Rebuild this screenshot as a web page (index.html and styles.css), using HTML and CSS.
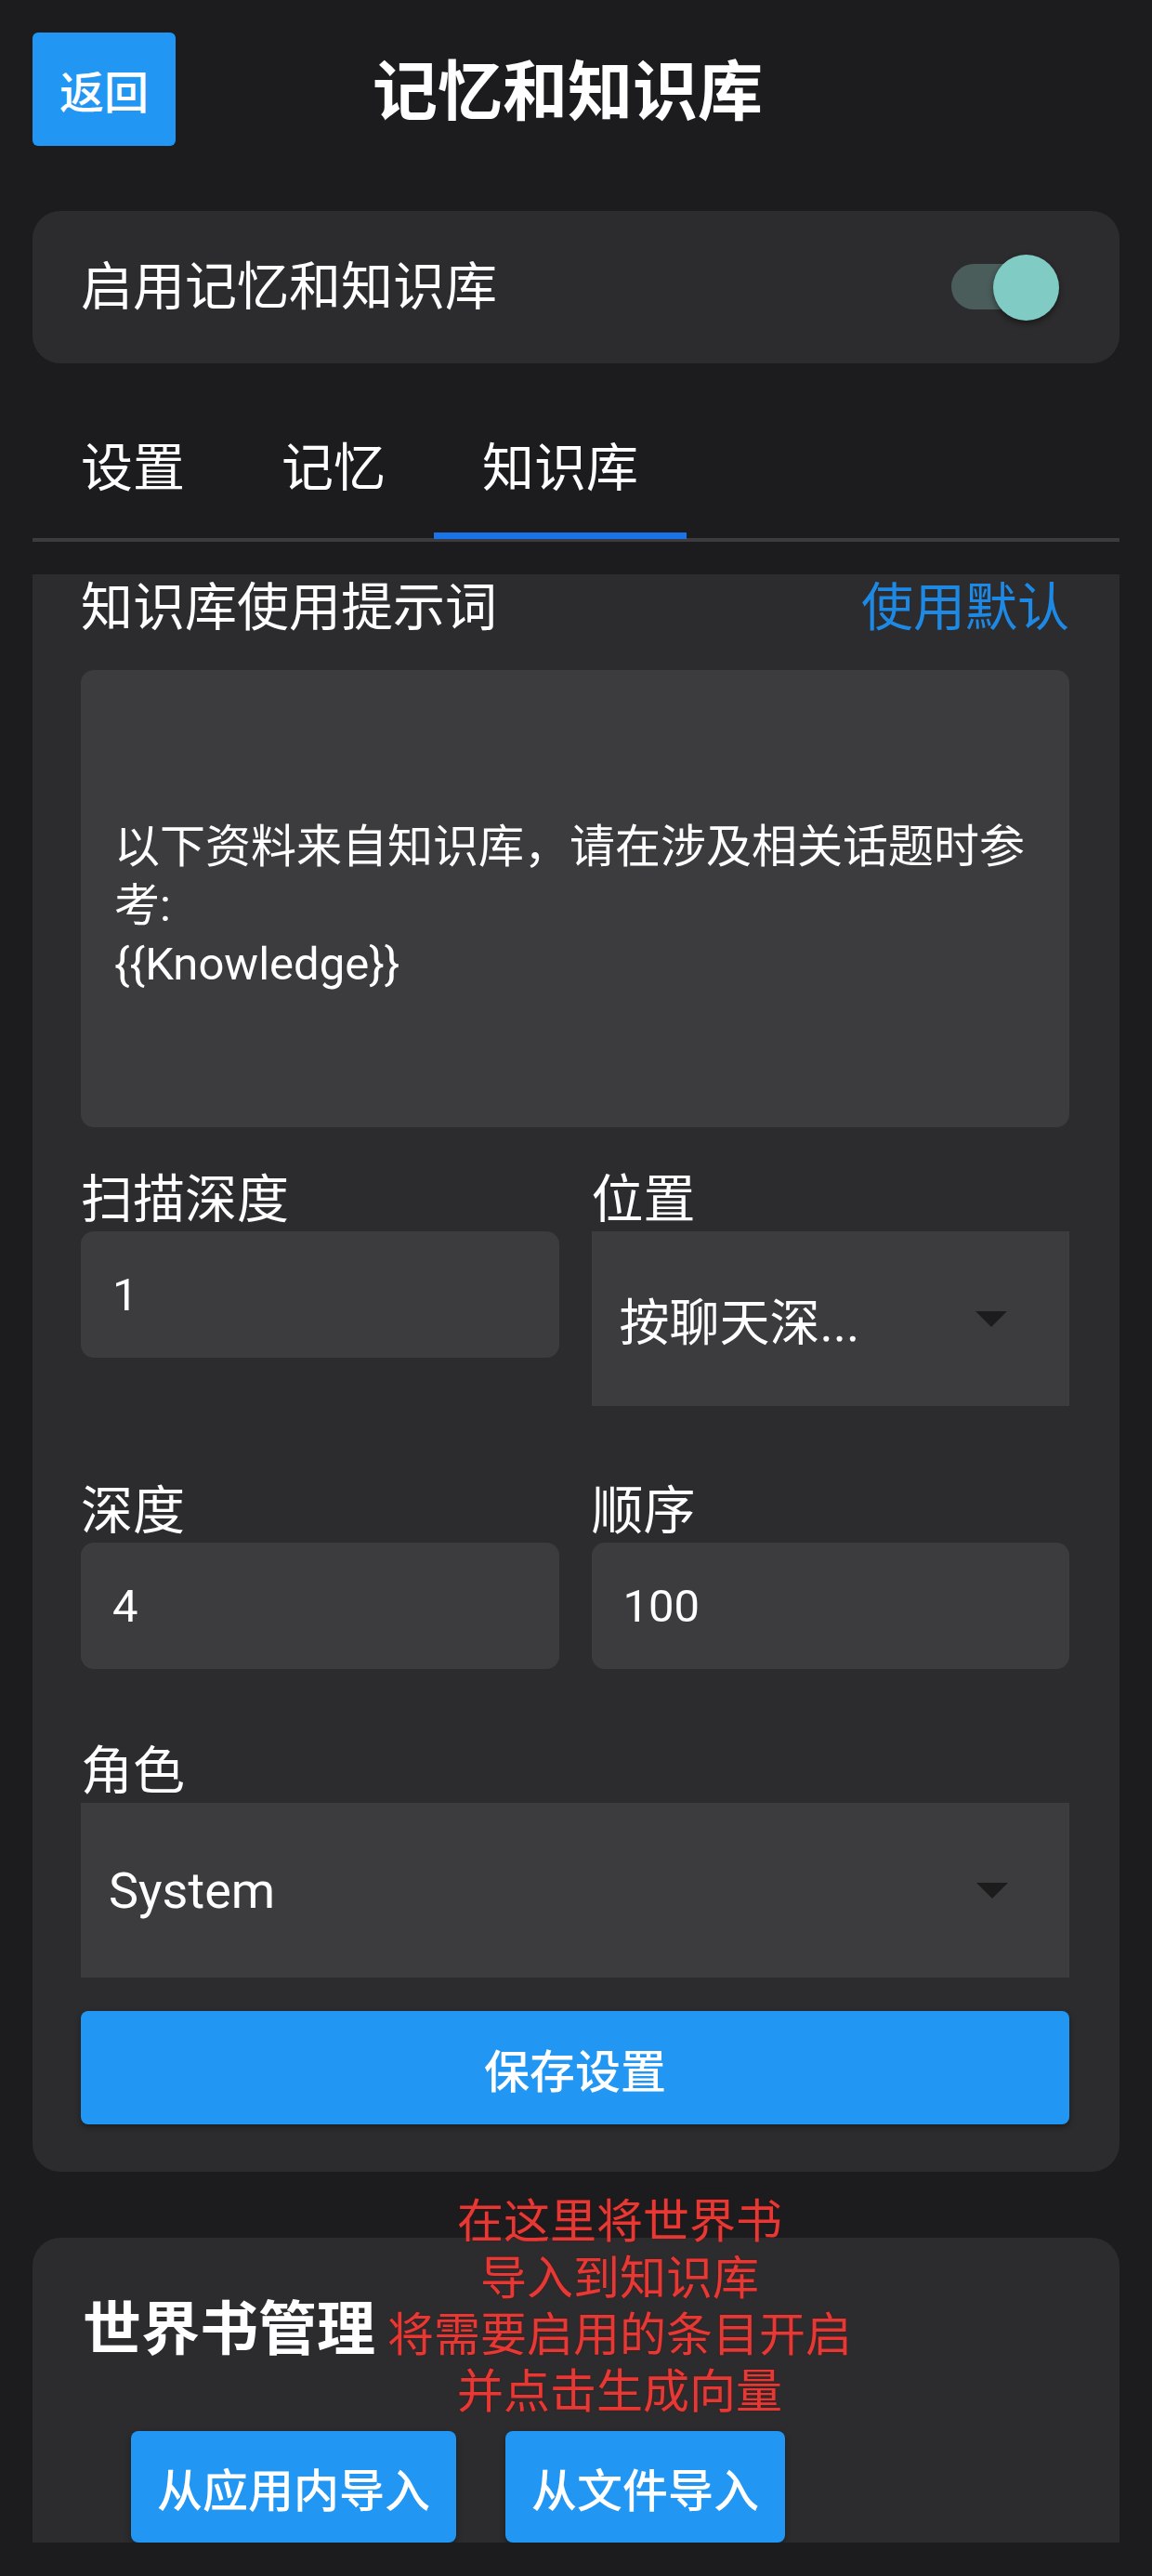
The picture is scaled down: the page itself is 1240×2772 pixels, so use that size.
FILE: index.html
```html
<!DOCTYPE html>
<html lang="zh-CN">
<head>
<meta charset="utf-8">
<title>记忆和知识库</title>
<link rel="stylesheet" href="styles.css">
</head>
<body>
<div class="app">
  <header class="topbar">
    <button class="back-btn">返回</button>
    <h1 class="title">记忆和知识库</h1>
  </header>

  <section class="switch-card">
    <span class="switch-label">启用记忆和知识库</span>
    <div class="switch"><span class="switch-track"></span><span class="switch-thumb"></span></div>
  </section>

  <nav class="tabs">
    <div class="tab">设置</div>
    <div class="tab">记忆</div>
    <div class="tab tab-active">知识库</div>
  </nav>

  <div class="viewport">
    <section class="card kb-card">
      <div class="head-row">
        <span class="label">知识库使用提示词</span>
        <span class="link">使用默认</span>
      </div>
      <div class="textarea">以下资料来自知识库，请在涉及相关话题时参考:<br>{{Knowledge}}</div>

      <div class="field-grid">
        <div class="field">
          <span class="label">扫描深度</span>
          <div class="input">1</div>
        </div>
        <div class="field">
          <span class="label">位置</span>
          <div class="select"><span>按聊天深...</span><span class="caret"></span></div>
        </div>
        <div class="field">
          <span class="label">深度</span>
          <div class="input">4</div>
        </div>
        <div class="field">
          <span class="label">顺序</span>
          <div class="input">100</div>
        </div>
      </div>

      <div class="field role-field">
        <span class="label">角色</span>
        <div class="select select-wide"><span>System</span><span class="caret"></span></div>
      </div>

      <button class="save-btn">保存设置</button>
    </section>

    <section class="card wb-card">
      <h2 class="wb-title">世界书管理</h2>
      <div class="wb-actions">
        <button class="action-btn">从应用内导入</button>
        <button class="action-btn">从文件导入</button>
      </div>
    </section>
  </div>

  <div class="annotation">在这里将世界书<br>导入到知识库<br>将需要启用的条目开启<br>并点击生成向量</div>
</div>
</body>
</html>
```

FILE: styles.css
```css
* { box-sizing: border-box; }

html, body {
  margin: 0;
  padding: 0;
}

body {
  width: 1240px;
  height: 2772px;
  overflow: hidden;
  background: #1c1c1e;
  color: #ffffff;
  font-family: Roboto, "Noto Sans CJK SC", sans-serif;
}

.app {
  position: relative;
  padding: 35px 35px 0;
}

/* Header */
.topbar {
  display: flex;
  align-items: center;
  height: 122px;
}

.back-btn {
  width: 154px;
  height: 122px;
  border: none;
  border-radius: 6px;
  background: #2196f3;
  color: #ffffff;
  font-family: inherit;
  font-size: 48px;
  font-weight: 500;
  padding: 0;
}

.title {
  margin: 8px 0 0 212px;
  font-size: 70px;
  font-weight: 700;
  line-height: 1;
}

/* Switch card */
.switch-card {
  margin-top: 70px;
  height: 164px;
  border-radius: 30px;
  background: #2c2c2e;
  padding: 0 65px 0 52px;
  display: flex;
  align-items: center;
  justify-content: space-between;
}

.switch-label {
  font-size: 56px;
  line-height: 68px;
}

.switch {
  position: relative;
  width: 116px;
  height: 71px;
}

.switch-track {
  position: absolute;
  left: 0;
  top: 10px;
  width: 100px;
  height: 49px;
  border-radius: 25px;
  background: #4a5d5b;
}

.switch-thumb {
  position: absolute;
  right: 0;
  top: 0;
  width: 71px;
  height: 71px;
  border-radius: 50%;
  background: #80cbc4;
  box-shadow: 0 3px 6px rgba(0, 0, 0, 0.45);
}

/* Tabs */
.tabs {
  display: flex;
  padding-left: 0;
  border-bottom: 4px solid #3c3c3e;
}

.tab {
  padding: 79px 52px 35px;
  font-size: 56px;
  line-height: 68px;
  border-bottom: 7px solid transparent;
  margin-bottom: -1px;
}

.tab-active {
  border-bottom-color: #1a73e8;
}

/* Scroll viewport */
.viewport {
  margin-top: 35px;
  height: 2118px;
  overflow: hidden;
}

.card {
  background: #2c2c2e;
}

.kb-card {
  border-radius: 0 0 30px 30px;
  padding: 2px 54px 51px 52px;
}

.head-row {
  display: flex;
  justify-content: space-between;
  align-items: center;
}

.label {
  font-size: 56px;
  line-height: 68px;
}

.link {
  font-size: 56px;
  line-height: 68px;
  color: #1e88e5;
}

.textarea {
  margin-top: 33px;
  height: 492px;
  border-radius: 14px;
  background: #3c3c3e;
  padding: 14px 36px 0;
  display: flex;
  flex-direction: column;
  justify-content: center;
  font-size: 49px;
  line-height: 63px;
}

.field-grid {
  margin-top: 44px;
  display: grid;
  grid-template-columns: 1fr 1fr;
  column-gap: 35px;
  row-gap: 79px;
  align-items: start;
}

.field {
  display: flex;
  flex-direction: column;
}

.input {
  height: 136px;
  border-radius: 14px;
  background: #3c3c3e;
  padding: 0 34px;
  display: flex;
  align-items: center;
  font-size: 49px;
}

.select {
  height: 188px;
  background: #3c3c3e;
  padding: 0 67px 0 30px;
  display: flex;
  align-items: center;
  justify-content: space-between;
  font-size: 54px;
}

.select-wide {
  padding-right: 66px;
}

.caret {
  width: 0;
  height: 0;
  border-left: 17px solid transparent;
  border-right: 17px solid transparent;
  border-top: 17px solid #1c1c1c;
}

.role-field {
  margin-top: 76px;
}

.save-btn {
  display: block;
  width: 100%;
  margin-top: 36px;
  height: 122px;
  border: none;
  border-radius: 8px;
  background: #2196f3;
  color: #ffffff;
  font-family: inherit;
  font-size: 49px;
  font-weight: 500;
  box-shadow: 0 3px 6px rgba(0, 0, 0, 0.35);
}

.wb-card {
  margin-top: 71px;
  border-radius: 30px 30px 0 0;
  padding: 61px 54px 60px;
}

.wb-title {
  margin: 0;
  font-size: 63px;
  font-weight: 700;
  line-height: 76px;
}

.wb-actions {
  margin-top: 71px;
  padding-left: 52px;
  display: flex;
  gap: 53px;
}

.action-btn {
  height: 120px;
  padding: 0 28px;
  border: none;
  border-radius: 8px;
  background: #2196f3;
  color: #ffffff;
  font-family: inherit;
  font-size: 49px;
  font-weight: 500;
  box-shadow: 0 3px 6px rgba(0, 0, 0, 0.35);
}

/* Red annotation drawn over the page */
.annotation {
  position: absolute;
  top: 2361px;
  left: 367px;
  width: 600px;
  text-align: center;
  font-size: 50px;
  line-height: 61px;
  color: #e53935;
  text-shadow: 0 0 2px rgba(120, 0, 0, 0.7);
}
```
